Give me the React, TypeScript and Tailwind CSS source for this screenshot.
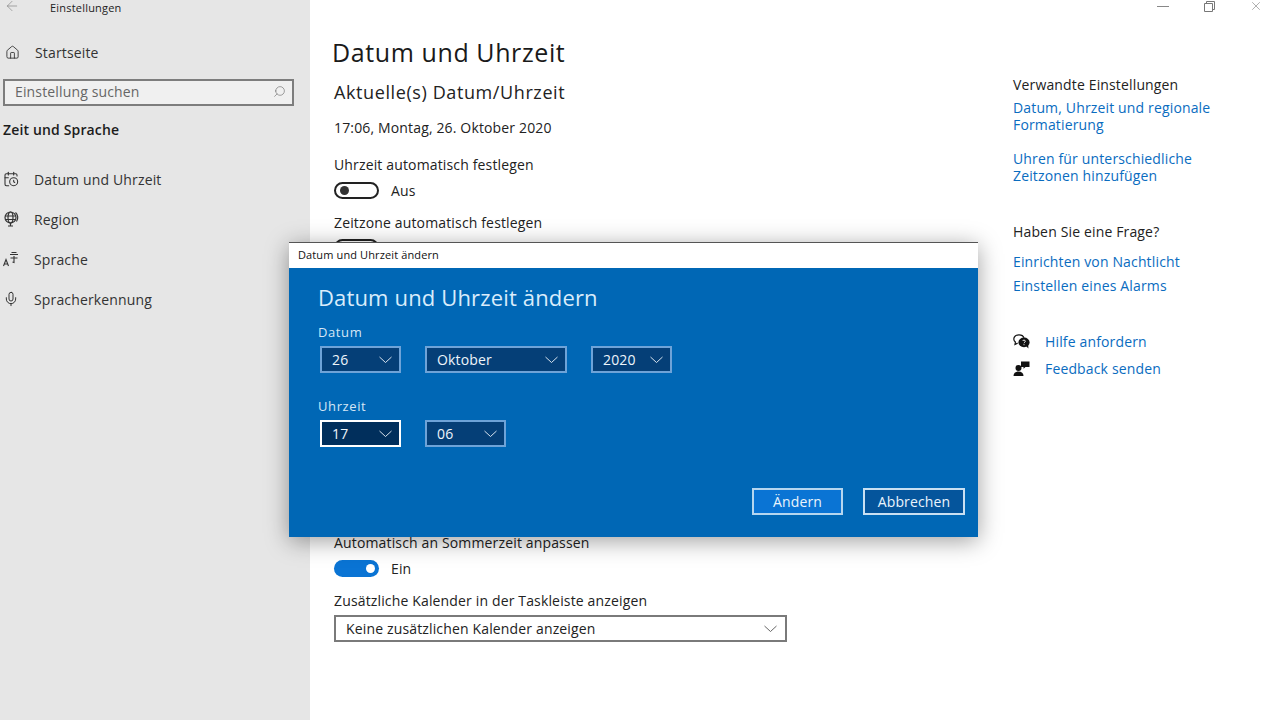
import { ArrowLeft, CalendarClock, Home, Mic, Search, X } from "lucide-react";

const navItems = ["Datum und Uhrzeit", "Region", "Sprache", "Spracherkennung"];

function NavIcon({ index }: { index: number }) {
  if (index === 0) return <CalendarClock size={16} strokeWidth={1.6} />;
  if (index === 1)
    return (
      <svg width="16" height="16" viewBox="0 0 16 16" fill="none" stroke="currentColor" strokeWidth="1.2">
        <circle cx="7.5" cy="6.5" r="5.5" />
        <ellipse cx="7.5" cy="6.5" rx="2.5" ry="5.5" />
        <path d="M2 5h11M2 8.5h11M7.5 12v3M5 15h5" />
        <path d="M12.5 1.5a6.8 6.8 0 0 1 1 9" />
      </svg>
    );
  if (index === 2)
    return (
      <svg width="16" height="16" viewBox="0 0 16 16" fill="none" stroke="currentColor" strokeWidth="1.1">
        <path d="M0.5 15 3 8.5 5.5 15M1.4 13h3.2" />
        <path d="M7 3.5h8M8.5 1.5h5M11 5v6.5l-1.5-.6M7.5 7h7" />
      </svg>
    );
  return <Mic size={16} strokeWidth={1.5} />;
}

function Chevron({ className }: { className?: string }) {
  return (
    <svg width="13" height="7" viewBox="0 0 13 7" fill="none" stroke="currentColor" strokeWidth="0.9" className={className}>
      <path d="M.5 1l6 5.5 6-5.5" />
    </svg>
  );
}

function Toggle({ on }: { on: boolean }) {
  return on ? (
    <div className="flex h-[17px] w-[45px] items-center justify-end rounded-full bg-[#0a74d4] pr-[4px]">
      <div className="h-[9px] w-[9px] rounded-full bg-white" />
    </div>
  ) : (
    <div className="flex h-[17px] w-[45px] items-center rounded-full border-2 border-[#222] bg-white pl-[4px]">
      <div className="h-[9px] w-[9px] rounded-full bg-[#333]" />
    </div>
  );
}

function DialogSelect({ value, width, gap, active }: { value: string; width: string; gap: string; active?: boolean }) {
  return (
    <div
      className={`flex h-[27px] items-center justify-between border-2 pl-[10px] text-[14px] text-[#eef5fb] ${width} ${gap} ${
        active ? "border-white bg-[#012f5c]" : "border-[#6ea3d8] bg-[#053f77]"
      }`}
    >
      <span>{value}</span>
      <Chevron className="mr-[7px]" />
    </div>
  );
}

function Dialog() {
  return (
    <div className="absolute left-[289px] top-[242px] flex h-[295px] w-[689px] flex-col border-t border-[#555] shadow-[0_4px_22px_rgba(0,0,0,0.38)]">
      <div className="flex h-[25px] items-center bg-white pl-[9px] text-[11px] tracking-[0.12px] text-[#111]">Datum und Uhrzeit ändern</div>
      <div className="flex flex-1 flex-col bg-[#0067b5] pl-[29px] pr-[13px] text-white">
        <div className="mt-[13px] text-[22px] leading-[32px] tracking-[0.15px] text-[#d9ecfb]">Datum und Uhrzeit ändern</div>
        <div className="mt-[10px] text-[13px] leading-[18px] tracking-[0.6px] text-[#d5e6f5]">Datum</div>
        <div className="mt-[5px] flex pl-[2px]">
          <DialogSelect value="26" width="w-[81px]" gap="mr-[24px]" />
          <DialogSelect value="Oktober" width="w-[142px]" gap="mr-[24px]" />
          <DialogSelect value="2020" width="w-[81px]" gap="" />
        </div>
        <div className="mt-[24px] text-[13px] leading-[18px] tracking-[0.6px] text-[#d5e6f5]">Uhrzeit</div>
        <div className="mt-[5px] flex pl-[2px]">
          <DialogSelect value="17" width="w-[81px]" gap="mr-[24px]" active />
          <DialogSelect value="06" width="w-[81px]" gap="" />
        </div>
        <div className="mt-[41px] flex justify-end gap-[20px] text-[14px]">
          <button className="h-[27px] w-[91px] border-2 border-[#b5d6ef] bg-[#0a74d4] text-[#eaf4fc]">Ändern</button>
          <button className="h-[27px] w-[102px] border-2 border-[#c9e0f2] bg-[#05559c] text-[#eaf4fc]">Abbrechen</button>
        </div>
      </div>
    </div>
  );
}

export default function App() {
  return (
    <div className="relative flex h-[720px] w-[1280px] overflow-hidden bg-white text-[14px] tracking-[0.15px] text-[#222]" style={{ fontFamily: '"Open Sans", sans-serif' }}>
      {/* Sidebar */}
      <aside className="flex w-[310px] shrink-0 flex-col bg-[#e6e6e6]">
        <div className="flex h-[15px] items-center">
          <ArrowLeft size={16} strokeWidth={0.9} className="-mt-[3px] ml-[4px] text-[#777]" />
          <span className="ml-[30px] text-[11px] leading-[15px] tracking-[0.2px] text-[#222]">Einstellungen</span>
        </div>
        <div className="mt-[27px] flex h-[20px] items-center">
          <Home size={15} strokeWidth={1.3} className="ml-[5px]" />
          <span className="ml-[15px] text-[#333]">Startseite</span>
        </div>
        <div className="ml-[3px] mt-[17px] flex h-[27px] w-[291px] items-center justify-between border-2 border-[#7d7d7d] bg-[#f0f0f0] pb-[2px] pl-[10px] pr-[6px] text-[#666]">
          <span>Einstellung suchen</span>
          <Search size={13} strokeWidth={1} className="-scale-x-100 text-[#555]" />
        </div>
        <div className="ml-[3px] mt-[14px] h-[20px] font-semibold leading-[20px] text-[#1c1c1c]">Zeit und Sprache</div>
        <nav className="mt-[29px] flex flex-col gap-[20px]">
          {navItems.map((item, i) => (
            <div key={item} className="flex h-[20px] items-center">
              <div className="ml-[3px] w-[31px] text-[#333]">
                <NavIcon index={i} />
              </div>
              <span className="text-[#333]">{item}</span>
            </div>
          ))}
        </nav>
      </aside>

      {/* Main column */}
      <main className="w-[703px] shrink-0 pl-[24px]">
        <h1 className="ml-[-2px] mt-[35px] text-[25px] leading-[34px] tracking-[0.6px] text-[#1a1a1a]">Datum und Uhrzeit</h1>
        <h2 className="mt-[11px] text-[18px] leading-[24px] tracking-[0.6px]">Aktuelle(s) Datum/Uhrzeit</h2>
        <p className="mt-[15px] leading-[18px]">17:06, Montag, 26. Oktober 2020</p>
        <p className="mt-[19px] leading-[18px]">Uhrzeit automatisch festlegen</p>
        <div className="mt-[8px] flex items-center gap-[12px] leading-[17px]">
          <Toggle on={false} />
          <span>Aus</span>
        </div>
        <p className="mt-[15px] leading-[18px]">Zeitzone automatisch festlegen</p>
        <div className="mt-[7px] flex items-center gap-[12px]">
          <Toggle on={false} />
        </div>
        <p className="mt-[278px] leading-[18px]">Automatisch an Sommerzeit anpassen</p>
        <div className="mt-[8px] flex items-center gap-[12px] leading-[17px]">
          <Toggle on />
          <span>Ein</span>
        </div>
        <p className="mt-[15px] leading-[18px]">Zusätzliche Kalender in der Taskleiste anzeigen</p>
        <div className="mt-[5px] flex h-[27px] w-[453px] items-center justify-between border-2 border-[#7a7a7a] pl-[10px] pr-[8px]">
          <span>Keine zusätzlichen Kalender anzeigen</span>
          <Chevron className="text-[#555]" />
        </div>
      </main>

      {/* Right column */}
      <section className="flex-1 leading-[17px] text-[#0a6cbf]">
        <div className="flex h-[12px] items-center justify-end pr-[17px] text-[#777]">
          <div className="h-px w-[12px] bg-[#888]" />
          <svg width="11" height="11" viewBox="0 0 11 11" fill="none" stroke="#777" className="ml-[35px]">
            <path d="M.5 2.5h8v8h-8zM2.5 2.5v-2h8v8h-2" />
          </svg>
          <X size={14} strokeWidth={1} className="ml-[34px]" />
        </div>
        <div className="mt-[64px] text-[#222]">Verwandte Einstellungen</div>
        <div className="mt-[6px]">Datum, Uhrzeit und regionale<br />Formatierung</div>
        <div className="mt-[17px]">Uhren für unterschiedliche<br />Zeitzonen hinzufügen</div>
        <div className="mt-[39px] text-[#222]">Haben Sie eine Frage?</div>
        <div className="mt-[13px]">Einrichten von Nachtlicht</div>
        <div className="mt-[7px]">Einstellen eines Alarms</div>
        <div className="mt-[39px] flex items-center gap-[15px]">
          <svg width="17" height="15" viewBox="0 0 17 15" className="shrink-0">
            <path d="M6 .8C3 .8.8 2.6.8 5c0 1.2.6 2.3 1.6 3L2 10.5l2.6-1.4" fill="none" stroke="#111" strokeWidth="1.2" />
            <path d="M6 .8c2.4 0 4.4 1.2 5 3" fill="none" stroke="#111" strokeWidth="1.2" />
            <ellipse cx="11" cy="8.4" rx="5.6" ry="4.8" fill="#111" />
            <path d="M13 12l2.4 2.6-.2-4z" fill="#111" />
            <path d="M9.6 7c.2-1.2 2.8-1.2 2.8.2 0 1-1.4 1-1.4 2M11 10.2v1" fill="none" stroke="#fff" strokeWidth="0.9" />
          </svg>
          <span>Hilfe anfordern</span>
        </div>
        <div className="mt-[10px] flex items-center gap-[15px]">
          <svg width="17" height="15" viewBox="0 0 17 15" className="shrink-0">
            <circle cx="5.5" cy="7" r="3" fill="#111" />
            <path d="M.5 15c0-3 2-4.6 5-4.6s5 1.6 5 4.6z" fill="#111" />
            <path d="M8 .5h8.5v5.5h-4l-2 1.8v-1.8H8z" fill="#111" />
          </svg>
          <span>Feedback senden</span>
        </div>
      </section>

      <Dialog />
    </div>
  );
}
